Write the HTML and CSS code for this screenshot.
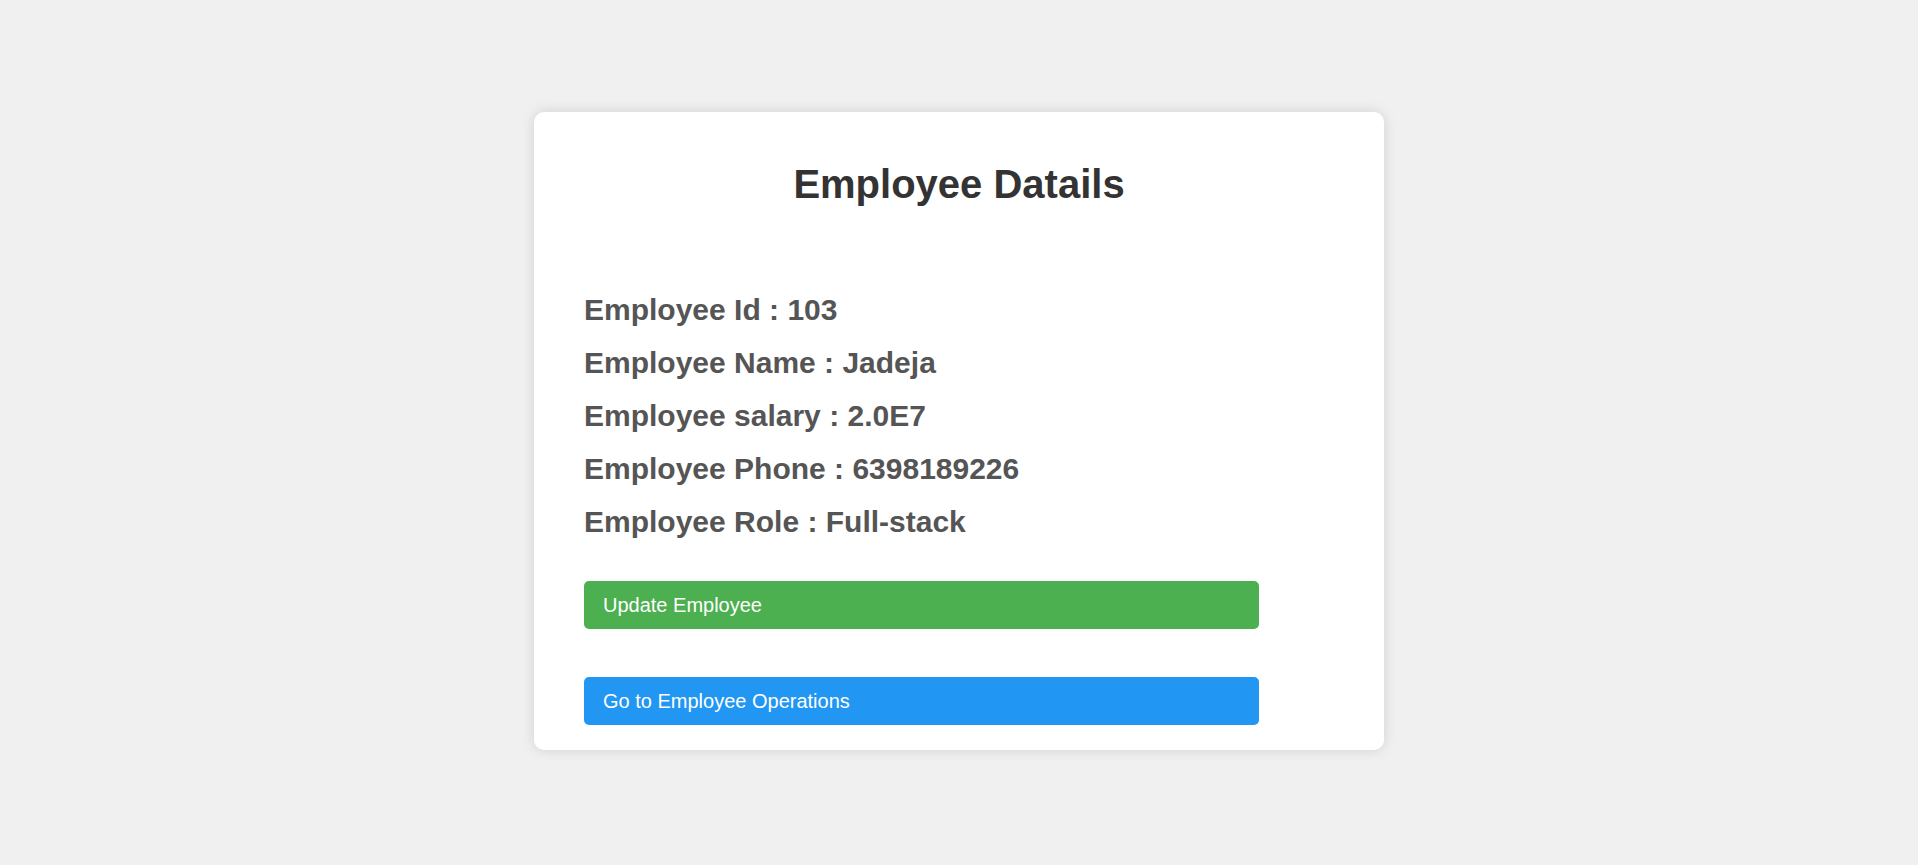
FILE: index.html
```html
<!DOCTYPE html>
<html lang="en">
<head>
<meta charset="utf-8">
<title>Employee Details</title>
<link rel="stylesheet" href="styles.css">
</head>
<body>
<main class="page">
  <section class="card">
    <h1 class="title">Employee Datails</h1>
    <div class="details">
      <div class="detail">Employee Id : 103</div>
      <div class="detail">Employee Name : Jadeja</div>
      <div class="detail">Employee salary : 2.0E7</div>
      <div class="detail">Employee Phone : 6398189226</div>
      <div class="detail">Employee Role : Full-stack</div>
    </div>
    <div class="actions">
      <button class="btn btn-green" type="button">Update Employee</button>
      <button class="btn btn-blue" type="button">Go to Employee Operations</button>
    </div>
  </section>
</main>
</body>
</html>
```
FILE: styles.css
```css
* { box-sizing: border-box; }

html, body {
  margin: 0;
  padding: 0;
}

body {
  background: #f0f0f0;
  font-family: "Liberation Sans", Arial, sans-serif;
  min-height: 865px;
}

.page {
  display: flex;
  justify-content: center;
  padding-top: 112px;
}

.card {
  width: 850px;
  background: #ffffff;
  border-radius: 10px;
  box-shadow: 0 0 14px rgba(0, 0, 0, 0.13);
  padding: 49px 50px 25px 50px;
}

.title {
  margin: 0;
  text-align: center;
  font-size: 40px;
  font-weight: bold;
  color: #333333;
  line-height: 46px;
}

.details {
  display: flex;
  flex-direction: column;
  margin-top: 76px;
}

.detail {
  font-size: 30px;
  font-weight: bold;
  color: #555555;
  line-height: 53px;
}

.actions {
  display: flex;
  flex-direction: column;
  gap: 48px;
  margin-top: 33px;
}

.btn {
  width: 675px;
  height: 48px;
  border: none;
  border-radius: 5px;
  color: #ffffff;
  font-family: "Liberation Sans", Arial, sans-serif;
  font-size: 20px;
  text-align: left;
  padding: 0 19px;
  line-height: 23px;
  cursor: pointer;
}

.btn-green { background: #4caf50; }
.btn-blue { background: #2196f3; }
```
